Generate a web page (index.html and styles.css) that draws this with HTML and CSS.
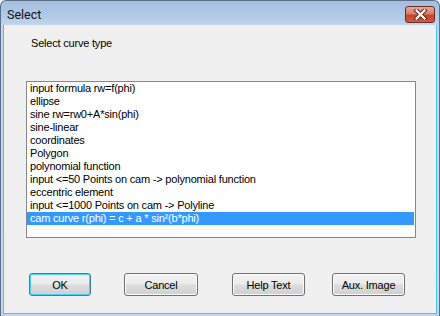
FILE: index.html
```html
<!DOCTYPE html>
<html>
<head>
    <title>Select</title>
    <link rel="stylesheet" href="styles.css">
</head>
<body>
    <div class="window">
        <div class="titlebar">
            <span class="title">Select</span>
            <div class="close">
                <svg width="17" height="11" viewBox="0 0 17 11">
                    <path d="M4.5 1.5 L12.5 9.5 M12.5 1.5 L4.5 9.5" stroke="#5a2a22" stroke-width="4.2" stroke-linecap="square"/>
                    <path d="M4.5 1.5 L12.5 9.5 M12.5 1.5 L4.5 9.5" stroke="#fff" stroke-width="2.2" stroke-linecap="square"/>
                </svg>
            </div>
        </div>

        <div class="client">
            <div class="caption">Select curve type</div>

            <div class="listbox">
                <div class="item">input formula rw=f(phi)</div>
                <div class="item">ellipse</div>
                <div class="item">sine rw=rw0+A*sin(phi)</div>
                <div class="item">sine-linear</div>
                <div class="item">coordinates</div>
                <div class="item">Polygon</div>
                <div class="item">polynomial function</div>
                <div class="item">input &lt;=50 Points on cam -&gt; polynomial function</div>
                <div class="item">eccentric element</div>
                <div class="item">input &lt;=1000 Points on cam -&gt; Polyline</div>
                <div class="item selected">cam curve r(phi) = c + a * sin&#178;(b*phi)</div>
            </div>

            <div class="buttons">
                <button class="btn btn-ok default">OK</button>
                <button class="btn btn-cancel">Cancel</button>
                <button class="btn btn-help">Help Text</button>
                <button class="btn btn-aux">Aux. Image</button>
            </div>
        </div>
    </div>
</body>
</html>
```

FILE: styles.css
```css
body {
    margin: 0;
    padding: 0;
    background-color: #fff;
}

.window {
    width: 438px;
    height: 315px;
    border: 1px solid #5d6f88;
    border-bottom: none;
    border-radius: 6px 6px 0 0;
    background: linear-gradient(to bottom, #a4bedf 0px, #b3cbe8 16px, #c2d6ee 26px, #c4d7ee 100%);
    display: flex;
    flex-direction: column;
}

.titlebar {
    height: 24px;
    display: flex;
    align-items: center;
    justify-content: space-between;
    padding: 0 4px 0 6px;
}

.title {
    font-family: Roboto, "Liberation Sans", sans-serif;
    font-size: 12.5px;
    color: #111;
    margin-top: 2px;
}

.close {
    width: 28px;
    height: 15px;
    margin-top: 2px;
    border: 1px solid #6b2e26;
    border-radius: 3px;
    background: linear-gradient(to bottom, #e8a99a 0%, #d77e68 45%, #c4452c 55%, #d05a3f 100%);
    display: flex;
    align-items: center;
    justify-content: center;
}

.close svg {
    display: block;
}

.client {
    flex: 1;
    margin: 0 2px 2px;
    border: 1px solid #44c4ee;
    border-top: none;
    background-color: #f0f0f0;
    font-family: "Liberation Sans", Arial, sans-serif;
    font-size: 11px;
    letter-spacing: -0.2px;
    color: #000;
}

.caption {
    padding: 12px 0 0 27px;
    line-height: 13px;
}

.listbox {
    margin: 31px 0 0 22px;
    width: 388px;
    height: 155px;
    border: 1px solid #828790;
    background-color: #fff;
}

.item {
    height: 13px;
    line-height: 13px;
    padding-left: 3px;
    white-space: nowrap;
}

.item.selected {
    background-color: #3399ff;
    color: #fff;
    margin-right: 1px;
}

.buttons {
    display: flex;
    margin-top: 35px;
    padding-left: 25px;
}

.btn {
    height: 23px;
    padding: 0;
    border: 1px solid #707070;
    border-radius: 3px;
    background: linear-gradient(to bottom, #f2f2f2 0%, #ebebeb 48%, #dddddd 52%, #cfcfcf 100%);
    font-family: "Liberation Sans", Arial, sans-serif;
    font-size: 11px;
    letter-spacing: -0.2px;
    color: #000;
    box-shadow: inset 0 0 0 1px #fcfcfc;
}

.btn.default {
    border-color: #3c7fb1;
    box-shadow: inset 0 0 0 1px #48d2f8;
}

.btn-ok {
    width: 62px;
}

.btn-cancel {
    width: 74px;
    margin-left: 33px;
}

.btn-help {
    width: 73px;
    margin-left: 34px;
}

.btn-aux {
    width: 73px;
    margin-left: 27px;
}
```
